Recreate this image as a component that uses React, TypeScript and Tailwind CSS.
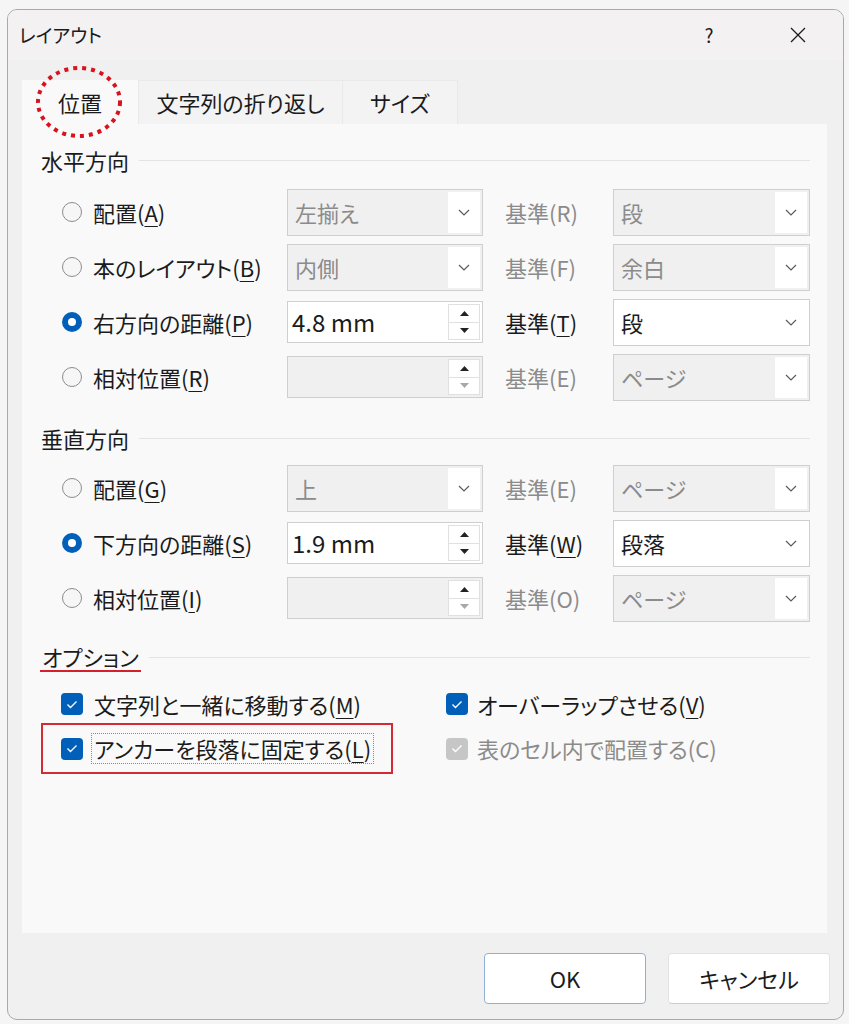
const ink = 'text-[#1b1b1b]';
const dim = 'text-[#8b8b8b]';

type Box = { kind: 'combo' | 'spin'; v: string; on: boolean };
type Row = { sel: boolean; t: string; k: string; box: Box; rk: string; ron: boolean; rv: string };

const horizontal: Row[] = [
  { sel: false, t: '配置', k: 'A', box: { kind: 'combo', v: '左揃え', on: false }, rk: 'R', ron: false, rv: '段' },
  { sel: false, t: '本のレイアウト', k: 'B', box: { kind: 'combo', v: '内側', on: false }, rk: 'F', ron: false, rv: '余白' },
  { sel: true, t: '右方向の距離', k: 'P', box: { kind: 'spin', v: '4.8 mm', on: true }, rk: 'T', ron: true, rv: '段' },
  { sel: false, t: '相対位置', k: 'R', box: { kind: 'spin', v: '', on: false }, rk: 'E', ron: false, rv: 'ページ' },
];

const vertical: Row[] = [
  { sel: false, t: '配置', k: 'G', box: { kind: 'combo', v: '上', on: false }, rk: 'E', ron: false, rv: 'ページ' },
  { sel: true, t: '下方向の距離', k: 'S', box: { kind: 'spin', v: '1.9 mm', on: true }, rk: 'W', ron: true, rv: '段落' },
  { sel: false, t: '相対位置', k: 'I', box: { kind: 'spin', v: '', on: false }, rk: 'O', ron: false, rv: 'ページ' },
];

function Mn({ text, k, off }: { text: string; k: string; off?: boolean }) {
  return (
    <span>
      {text}(
      {off ? k : <span className="underline underline-offset-[4px] decoration-1">{k}</span>})
    </span>
  );
}

function Chevron() {
  return (
    <svg width="12" height="7" viewBox="0 0 12 7">
      <polyline points="1,1 6,6 11,1" fill="none" stroke="#5a5a5a" strokeWidth="1.2" />
    </svg>
  );
}

function Radio({ on }: { on: boolean }) {
  return on ? (
    <span className="w-[20px] h-[20px] rounded-full bg-[#005fb8] flex items-center justify-center shrink-0">
      <span className="w-[8px] h-[8px] rounded-full bg-white" />
    </span>
  ) : (
    <span className="w-[20px] h-[20px] rounded-full border border-[#8d8d8d] bg-[#f6f6f6] shrink-0" />
  );
}

function Combo({ v, on, w }: { v: string; on: boolean; w: string }) {
  return (
    <div className={`h-[47px] ${w} flex border border-[#cfcfcf] p-[2px] ${on ? 'bg-white' : 'bg-[#f0f0f0]'}`}>
      <div className={`flex-1 flex items-center pl-[5px] text-[22px] ${on ? ink : dim}`}>{v}</div>
      <div className="w-[32px] bg-white flex items-center justify-center">
        <Chevron />
      </div>
    </div>
  );
}

function Spin({ v, on }: { v: string; on: boolean }) {
  return (
    <div className={`h-[42px] w-[196px] flex border border-[#cfcfcf] p-[2px] ${on ? 'bg-white' : 'bg-[#f0f0f0]'}`}>
      <div className={`flex-1 flex items-center pl-[2px] text-[24px] ${ink}`}>{v}</div>
      <div className="w-[32px] flex flex-col border border-[#e0e0e0] bg-white">
        <div className="flex-1 flex items-center justify-center border-b border-[#e0e0e0]">
          <svg width="9" height="5" viewBox="0 0 9 5">
            <polygon points="0,5 4.5,0 9,5" fill="#222" />
          </svg>
        </div>
        <div className="flex-1 flex items-center justify-center">
          <svg width="9" height="5" viewBox="0 0 9 5">
            <polygon points="0,0 9,0 4.5,5" fill={on ? '#222' : '#a8a8a8'} />
          </svg>
        </div>
      </div>
    </div>
  );
}

function Check({ off }: { off?: boolean }) {
  return (
    <span className={`w-[22px] h-[22px] rounded-[4px] flex items-center justify-center shrink-0 ${off ? 'bg-[#c6c6c6]' : 'bg-[#005fb8]'}`}>
      <svg width="12" height="9" viewBox="0 0 12 9">
        <polyline points="1.5,4.5 4.5,7.5 10.5,1.5" fill="none" stroke="white" strokeWidth="1.4" />
      </svg>
    </span>
  );
}

function Head({ children }: { children: React.ReactNode }) {
  return (
    <div className="flex items-center h-[30px] pl-[19px] pr-[17px]">
      <span className={`text-[22px] leading-[30px] ${ink}`}>{children}</span>
      <div className="flex-1 h-px bg-[#e3e3e3] ml-[10px]" />
    </div>
  );
}

function Rows({ rows }: { rows: Row[] }) {
  return (
    <div className="flex flex-col gap-[7px] pl-[40px]">
      {rows.map((r, i) => (
        <div key={i} className="h-[48px] flex items-center">
          <div className={`w-[225px] flex items-center gap-[11px] text-[22px] ${ink}`}>
            <Radio on={r.sel} />
            <Mn text={r.t} k={r.k} />
          </div>
          {r.box.kind === 'combo' ? <Combo v={r.box.v} on={r.box.on} w="w-[196px]" /> : <Spin v={r.box.v} on={r.box.on} />}
          <div className={`ml-[22px] w-[108px] text-[22px] ${r.ron ? ink : dim}`}>
            <Mn text="基準" k={r.rk} off={!r.ron} />
          </div>
          <Combo v={r.rv} on={r.ron} w="w-[197px]" />
        </div>
      ))}
    </div>
  );
}

export default function App() {
  return (
    <div className="w-[849px] h-[1024px] bg-[#f5f5f5] pt-[9px] pl-[7px] font-['Noto_Sans_CJK_JP','Noto_Sans',sans-serif] [font-feature-settings:'palt']">
      <div className="w-[837px] h-[1011px] border border-[#a9a9a9] rounded-[10px] bg-[#f0f0f0] flex flex-col overflow-hidden">
        {/* title bar */}
        <div className="h-[50px] shrink-0 bg-[#f4f1f3] flex items-center pl-[11px] pr-[25px]">
          <span className={`text-[19px] ${ink}`}>レイアウト</span>
          <div className="flex-1" />
          <span className={`w-[40px] text-center text-[19px] ${ink}`}>?</span>
          <span className="w-[40px] ml-[49px] flex justify-center">
            <svg width="16" height="16" viewBox="0 0 16 16">
              <path d="M1 1L15 15M15 1L1 15" stroke="#1b1b1b" strokeWidth="1.3" />
            </svg>
          </span>
        </div>

        {/* tabs */}
        <div className="mt-[20px] ml-[14px] flex h-[44px] shrink-0">
          <div className="relative w-[116px] bg-[#f9f9f9] flex items-center justify-center text-[22px]">
            <span className={ink}>位置</span>
            <svg className="absolute left-[14px] top-[-14px]" width="86" height="72" viewBox="0 0 86 72">
              <ellipse cx="43" cy="36" rx="41" ry="34" fill="none" stroke="#d8121e" strokeWidth="4" strokeDasharray="4 5" />
            </svg>
          </div>
          <div className={`w-[205px] bg-[#f3f3f3] border-l border-r border-t border-[#e9e9e9] flex items-center justify-center text-[22px] ${ink}`}>
            文字列の折り返し
          </div>
          <div className={`w-[115px] bg-[#f3f3f3] border-r border-t border-[#e9e9e9] flex items-center justify-center text-[22px] ${ink}`}>
            サイズ
          </div>
        </div>

        {/* panel */}
        <div className="ml-[14px] w-[805px] h-[809px] shrink-0 bg-[#f9f9f9] flex flex-col">
          <div className="mt-[21px]">
            <Head>水平方向</Head>
          </div>
          <div className="mt-[13px]">
            <Rows rows={horizontal} />
          </div>
          <div className="mt-[22px]">
            <Head>垂直方向</Head>
          </div>
          <div className="mt-[11px]">
            <Rows rows={vertical} />
          </div>

          <div className="mt-[20px] flex items-center h-[30px] pl-[18px] pr-[17px]">
            <span className={`h-[30px] px-[2px] border-b-2 border-[#d4202c] text-[22px] leading-[28px] ${ink}`}>オプション</span>
            <div className="flex-1 h-px bg-[#e3e3e3] ml-[8px]" />
          </div>

          <div className="mt-[13px] flex text-[22px]">
            <div className="w-[424px] flex flex-col">
              <div className={`h-[38px] pl-[39px] flex items-center gap-[11px] ${ink}`}>
                <Check />
                <Mn text="文字列と一緒に移動する" k="M" />
              </div>
              <div className="ml-[19px] w-[352px] h-[51px] border-2 border-[#d42a35] pl-[18px] flex items-center gap-[8px]">
                <Check />
                <span className={`border border-dotted border-[#8a8a8a] px-[2px] leading-[29px] ${ink}`}>
                  <Mn text="アンカーを段落に固定する" k="L" />
                </span>
              </div>
            </div>
            <div className="flex flex-col">
              <div className={`h-[38px] flex items-center gap-[9px] ${ink}`}>
                <Check />
                <Mn text="オーバーラップさせる" k="V" />
              </div>
              <div className={`h-[51px] flex items-center gap-[9px] ${dim}`}>
                <Check off />
                <span>表のセル内で配置する(C)</span>
              </div>
            </div>
          </div>
        </div>

        {/* buttons */}
        <div className="mt-[20px] flex justify-end gap-[22px] pr-[13px]">
          <button className={`w-[162px] h-[51px] bg-white border border-[#8fb1d4] rounded-[4px] text-[22px] ${ink}`}>OK</button>
          <button className={`w-[162px] h-[51px] bg-white border border-[#e3e3e3] border-b-[#cccccc] rounded-[4px] text-[22px] ${ink}`}>キャンセル</button>
        </div>
      </div>
    </div>
  );
}
